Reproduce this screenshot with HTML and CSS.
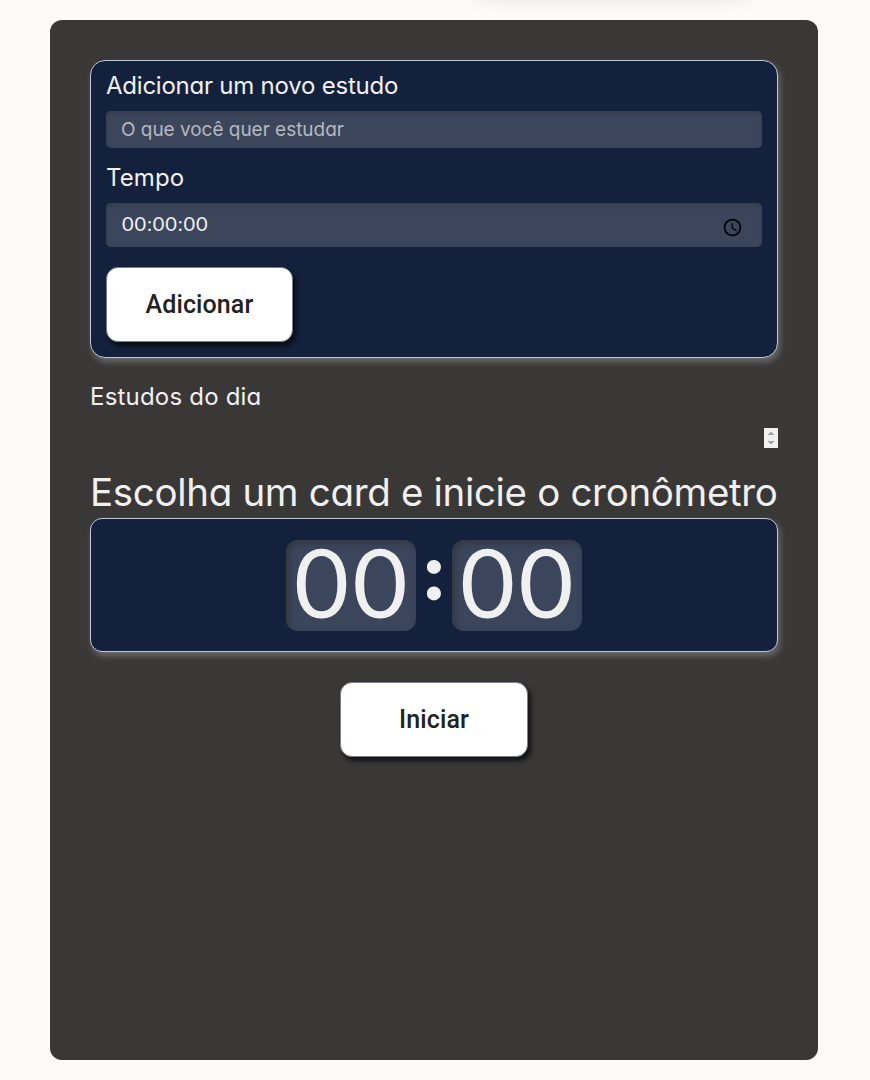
FILE: index.html
```html
<!DOCTYPE html>
<html lang="pt-BR">
<head>
<meta charset="utf-8">
<title>Estudos</title>
<link rel="stylesheet" href="styles.css">
</head>
<body>
<div class="top-shadow"></div>
<main class="app">
  <form class="panel form">
    <label class="label">Adicionar um novo estudo</label>
    <div class="field field-task">O que você quer estudar</div>
    <label class="label label-time">Tempo</label>
    <div class="field field-time">
      <span class="time-value">00:00:00</span>
      <svg class="clock" viewBox="0 0 24 24" width="21" height="21" fill="#000"><path d="M11.99 2C6.47 2 2 6.48 2 12s4.47 10 9.99 10C17.52 22 22 17.52 22 12S17.52 2 11.99 2zM12 20c-4.42 0-8-3.58-8-8s3.58-8 8-8 8 3.58 8 8-3.58 8-8 8zm.5-13H11v6l5.25 3.15.75-1.23-4.5-2.67z"/></svg>
    </div>
    <button type="button" class="button">Adicionar</button>
  </form>
  <h2 class="list-title">Estudos do dia</h2>
  <div class="list">
    <svg class="scroller" width="14" height="20" viewBox="0 0 14 20"><path fill="#f1f1f1" d="M0 0h14v20H0z"/><path fill="#a3a3a3" d="M4 7h6V6H9V5H8V4H6v1H5v1H4zM4 13h6v1H9v1H8v1H6v-1H5v-1H4z"/></svg>
  </div>
  <p class="timer-title">Escolha um card e inicie o cronômetro</p>
  <div class="panel timer">
    <span class="digits">00</span><span class="colon">:</span><span class="digits">00</span>
  </div>
  <button type="button" class="button start">Iniciar</button>
</main>
</body>
</html>
```
FILE: styles.css
```css
* { box-sizing: border-box; }
body {
  margin: 0;
  height: 1080px;
  overflow: hidden;
  padding: 20px 52px 20px 50px;
  background: #fffafa;
  color: #f0f0f0;
  font-family: Inter, "Liberation Sans", sans-serif;
  font-feature-settings: "cv11" 1;
}
.top-shadow {
  position: absolute;
  top: -22px;
  left: 478px;
  width: 268px;
  height: 18px;
  box-shadow: 0 2px 18px rgba(0, 0, 0, .1);
}
.app {
  display: flex;
  flex-direction: column;
  height: 1040px;
  padding: 40px;
  border-radius: 12px;
  background: #3a3737;
}
.panel {
  border: 1px solid #bfc8db;
  border-radius: 15px;
  background: #14213d;
  box-shadow: 2px 4px 6px rgba(255, 255, 255, .25);
}
.form { height: 298px; padding: 10px 15px 15px; }
.label { display: block; height: 40px; font-size: 24px; letter-spacing: -.23px; line-height: 30px; white-space: nowrap; }
.label-time { margin-top: 15px; letter-spacing: .1px; }
.field {
  display: flex;
  align-items: center;
  justify-content: space-between;
  padding: 0 19px 0 15px;
  border-radius: 5px;
  background: #3b465d;
  box-shadow: inset 1px 2px 5px #363c48;
}
.field-task { height: 37px; color: #b5b8bd; font-size: 19px; letter-spacing: -.03px; }
.field-time { height: 44px; padding-left: 16px; }
.time-value { padding-bottom: 4px; font-family: Lato, sans-serif; font-size: 20px; letter-spacing: .85px; }
.clock { margin-top: 5px; }
.button {
  display: block;
  width: 187px;
  height: 75px;
  margin: 20px 0 0;
  padding: 0;
  border: 1px solid #777d89;
  border-radius: 12px;
  background: #fff;
  box-shadow: 3px 4px 5px rgba(0, 0, 0, .7);
  color: #222;
  font: 500 25px/1 Roboto, sans-serif;
  letter-spacing: .1px;
}
.list-title { height: 30px; margin: 24px 0 0; font-size: 24px; font-weight: 400; letter-spacing: .2px; line-height: 30px; }
.list { display: flex; justify-content: flex-end; height: 20px; margin-top: 16px; }
.timer-title { height: 51px; margin: 19px 0 0; font-size: 38.5px; font-weight: 400; line-height: 50px; white-space: nowrap; letter-spacing: -.33px; }
.timer { display: flex; justify-content: center; align-items: center; height: 134px; border-radius: 12px; }
.digits {
  display: flex;
  justify-content: center;
  width: 130px;
  height: 91px;
  padding-left: 3px;
  border-radius: 12px;
  background: #3b465d;
  box-shadow: inset 3px 3px 7px #333740;
  font-family: Lato, sans-serif;
  font-size: 95px;
  letter-spacing: 3.5px;
  line-height: 83px;
}
.colon { width: 36px; padding-bottom: 31px; text-align: center; font: 900 76px/80px Lato, sans-serif; -webkit-text-stroke: 1.5px #f0f0f0; }
.start { align-self: center; width: 188px; margin-top: 30px; }
```
